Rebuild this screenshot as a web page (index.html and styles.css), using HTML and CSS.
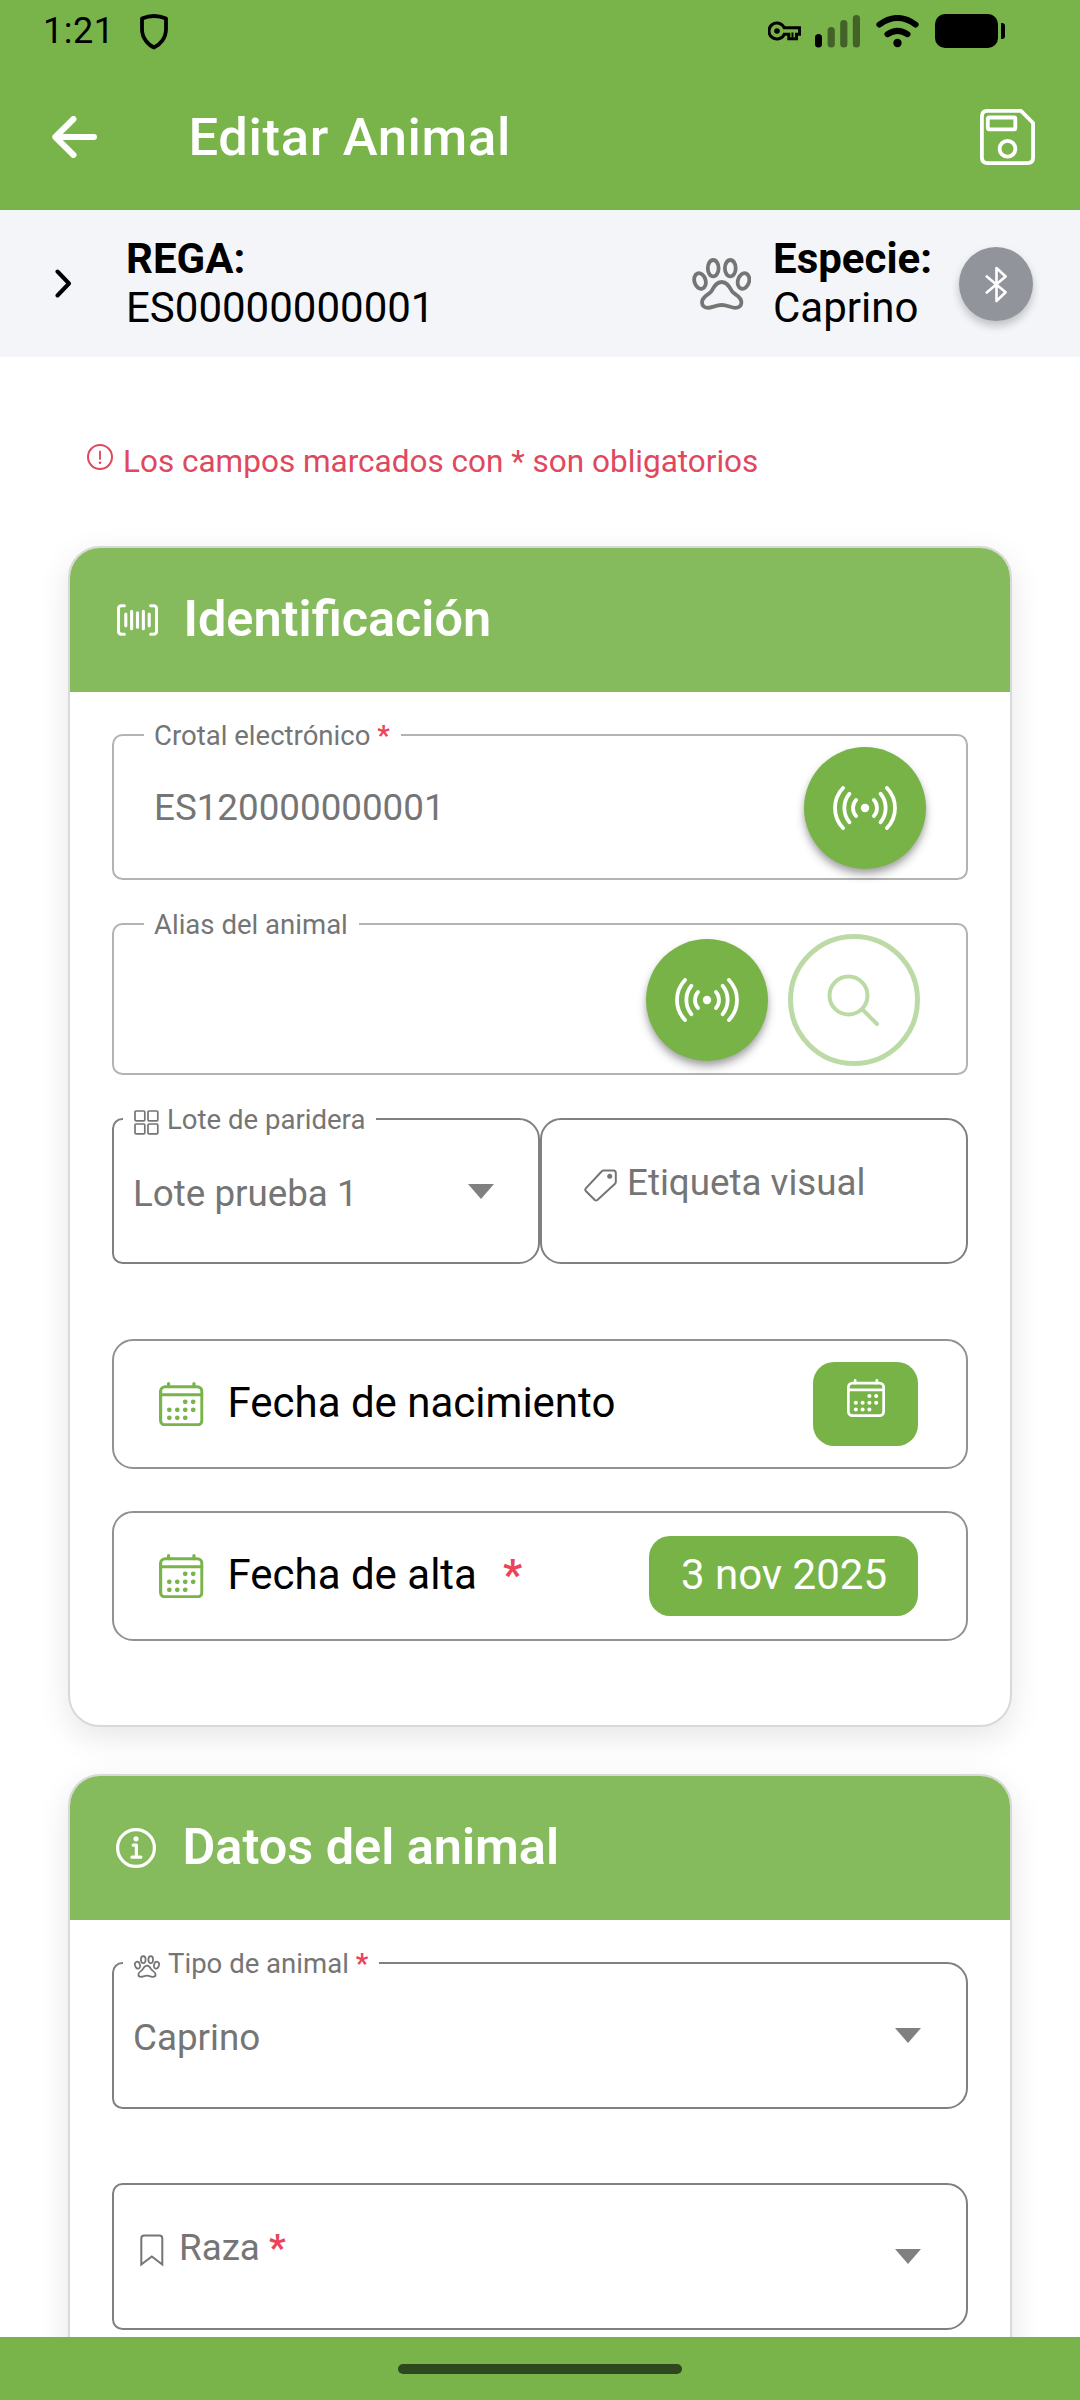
FILE: index.html
```html
<!DOCTYPE html>
<html lang="es">
<head>
<meta charset="utf-8">
<title>Editar Animal</title>
<link rel="stylesheet" href="styles.css">
</head>
<body>
<svg class="defs" width="0" height="0">
  <symbol id="paw" viewBox="0 0 59.5 52">
    <g fill="none" stroke="currentColor" stroke-linejoin="round">
      <ellipse cx="21.2" cy="10.2" rx="5.4" ry="8.2"/><ellipse cx="38.3" cy="10.2" rx="5.4" ry="8.2"/>
      <ellipse cx="8" cy="23" rx="5.6" ry="8" transform="rotate(-16 8 23)"/><ellipse cx="51.5" cy="23" rx="5.6" ry="8" transform="rotate(16 51.5 23)"/>
      <path d="M29.7 24C24 24 22 29 19.6 33C17 37 10 38 10 44.5C10 48 13 49.8 16 49.8C20 49.8 24 47 29.7 47C35.4 47 39 49.8 43.4 49.8C46.4 49.8 49.4 48 49.4 44.5C49.4 38 42.4 37 39.8 33C37.4 29 35.4 24 29.7 24Z"/>
    </g>
  </symbol>
  <symbol id="calendar" viewBox="32 32 448 448">
    <rect x="48" y="80" width="416" height="384" rx="48" fill="none" stroke="currentColor" stroke-width="32"/>
    <path d="M128 48v32M384 48v32M464 160H48" fill="none" stroke="currentColor" stroke-width="32" stroke-linecap="round"/>
    <g fill="currentColor"><circle cx="296" cy="232" r="24"/><circle cx="376" cy="232" r="24"/><circle cx="296" cy="312" r="24"/><circle cx="376" cy="312" r="24"/><circle cx="136" cy="312" r="24"/><circle cx="216" cy="312" r="24"/><circle cx="136" cy="392" r="24"/><circle cx="216" cy="392" r="24"/><circle cx="296" cy="392" r="24"/></g>
  </symbol>
  <symbol id="radio" viewBox="-32 -22 64 44">
    <circle r="4.2" fill="currentColor"/>
    <path d="M-9 -8A12.2 12.2 0 0 0 -9 8M-15.6 -14.2A22.5 22.5 0 0 0 -15.6 14.2M-22 -20A29 29 0 0 0 -22 20M9 -8A12.2 12.2 0 0 1 9 8M15.6 -14.2A22.5 22.5 0 0 1 15.6 14.2M22 -20A29 29 0 0 1 22 20" fill="none" stroke="currentColor" stroke-width="3.8" stroke-linecap="round"/>
  </symbol>
</svg>

<div class="screen">
  <header class="top">
    <div class="status">
      <div class="status-left">
        <span class="clock">1:21</span>
        <svg width="28" height="36" viewBox="0 0 28 36"><path d="M2 4.6Q14 -.6 26 4.6V15C26 24 20 31 14 33.6C8 31 2 24 2 15Z" fill="none" stroke="#000" stroke-width="3.8" stroke-linejoin="round"/></svg>
      </div>
      <div class="status-right">
        <svg class="key" width="34" height="20" viewBox="0 0 34 20"><path d="M16.2 6.7A8 8 0 1 0 16.2 13.3H20.8V17.8H28.5V13.3H31.5V6.7Z" fill="none" stroke="#000" stroke-width="3"/><circle cx="9" cy="10" r="2.8"/><path d="M24.500 11.500v5" stroke="#000" stroke-width="2"/></svg>
        <svg class="signal" width="46" height="33" viewBox="0 0 46 33"><rect x="0" y="19" width="7" height="13.5" rx="3.5"/><g opacity=".45"><rect x="12.6" y="12" width="7.2" height="20.5" rx="3.5"/><rect x="25.2" y="5" width="7.2" height="27.5" rx="3.5"/><rect x="37.8" y="0" width="7.2" height="32.5" rx="3.5"/></g></svg>
        <svg class="wifi" width="43" height="33" viewBox="0 0 43 33"><path d="M3.4 9.6Q21.5 -3.6 39.6 9.6M11.5 19.2Q21.5 12.6 31.5 19.2" fill="none" stroke="#000" stroke-width="6" stroke-linecap="round"/><circle cx="21.5" cy="28" r="4.2"/></svg>
        <span class="battery"></span><span class="battery-tip"></span>
      </div>
    </div>
    <div class="toolbar">
      <svg width="45" height="42" viewBox="0 0 45 42"><path d="M42 21H4M21.5 3L3.3 21L21.5 39" fill="none" stroke="#fff" stroke-width="6" stroke-linecap="round" stroke-linejoin="round"/></svg>
      <h1 class="title">Editar Animal</h1>
      <svg width="55" height="56" viewBox="0 0 55 56" fill="none" stroke="#fff" stroke-width="3.8" stroke-linejoin="round"><path d="M7 1.9H41L53.1 14V48.5Q53.1 54.1 47.5 54.1H7.5Q1.9 54.1 1.9 48.5V7.5Q1.9 1.9 7 1.9Z"/><rect x="7.800" y="8.500" width="27.500" height="11.800" rx="1"/><circle cx="27.500" cy="39.700" r="7.900"/></svg>
    </div>
  </header>

  <section class="farm">
    <svg width="17" height="29" viewBox="0 0 17 29"><path d="M2.5 2.5L14 14.5L2.5 26.5" fill="none" stroke="#000" stroke-width="4" stroke-linecap="round" stroke-linejoin="round"/></svg>
    <p class="rega"><b>REGA:</b><br>ES00000000001</p>
    <svg class="farm-paw" width="59.5" height="52"><use href="#paw"/></svg>
    <p class="species"><b>Especie:</b><br>Caprino</p>
    <span class="bt"><svg width="23" height="37" viewBox="0 0 23 37"><path d="M1.8 10.5L20.6 26.2L11.5 35V2L20.6 10.5L1.8 26.5" fill="none" stroke="#fff" stroke-width="2.6" stroke-linejoin="round" stroke-linecap="round"/></svg></span>
  </section>

  <main class="content">
    <p class="notice">
      <svg width="26" height="26" viewBox="48 48 416 416"><circle cx="256" cy="256" r="192" fill="none" stroke="currentColor" stroke-width="32"/><path d="M256 166V286" stroke="currentColor" stroke-width="30" stroke-linecap="round"/><circle cx="256" cy="348" r="21" fill="currentColor"/></svg>
      <span>Los campos marcados con * son obligatorios</span>
    </p>

    <article class="card">
      <h2 class="card-head">
        <svg width="41" height="32" viewBox="32 81 448 350" fill="none" stroke="#fff" stroke-width="34" stroke-linecap="round" stroke-linejoin="round"><path d="M400 412h32a32 32 0 0 0 32-32v-248a32 32 0 0 0-32-32h-32M112 100H80a32 32 0 0 0-32 32v248a32 32 0 0 0 32 32h32M384 192v128M320 160v192M256 176v160M192 160v192M128 192v128"/></svg>
        <span>Identificación</span>
      </h2>
      <div class="card-body">
        <div class="field light padded">
          <label class="float">Crotal electrónico <b class="req">*</b></label>
          <span class="value">ES120000000001</span>
          <span class="round scan"><svg width="64" height="44"><use href="#radio"/></svg></span>
        </div>
        <div class="field light padded tall">
          <label class="float">Alias del animal</label>
          <span class="round scan second"><svg width="64" height="44"><use href="#radio"/></svg></span>
          <span class="round search"><svg width="56" height="56" viewBox="0 0 56 56"><circle cx="23.500" cy="23.500" r="19" fill="none" stroke="currentColor" stroke-width="4"/><path d="M37.500 37.500L52 52" stroke="currentColor" stroke-width="4" stroke-linecap="round"/></svg></span>
        </div>
        <div class="pair">
          <div class="field select">
            <label class="float"><svg width="25" height="25" viewBox="0 0 25 25" fill="none" stroke="currentColor" stroke-width="1.700"><rect x="1" y="1" width="9.800" height="9.800" rx="1"/><rect x="14" y="1" width="9.800" height="9.800" rx="1"/><rect x="1" y="14" width="9.800" height="9.800" rx="1"/><rect x="14" y="14" width="9.800" height="9.800" rx="1"/></svg><span>Lote de paridera</span></label>
            <span class="value">Lote prueba 1</span>
            <i class="caret"></i>
          </div>
          <div class="field tag">
            <svg width="34" height="33" viewBox="0 0 34 33"><path d="M19.5 1.5H29.5Q31.8 1.5 31.8 4V12.8Q31.8 14 31 14.8L13.4 31Q12 32 10.8 31L1.8 22Q.8 20.6 1.8 19.4L17.8 2.3Q18.5 1.5 19.5 1.5Z" fill="none" stroke="currentColor" stroke-width="2"/><circle cx="25.700" cy="7.300" r="2.500" fill="currentColor"/></svg>
            <span class="placeholder">Etiqueta visual</span>
          </div>
        </div>
        <div class="date first">
          <svg class="green" width="44.5" height="44.5"><use href="#calendar"/></svg>
          <span class="date-label">Fecha de nacimiento</span>
          <span class="pill icon"><svg width="38" height="38"><use href="#calendar"/></svg></span>
        </div>
        <div class="date">
          <svg class="green" width="44.5" height="44.5"><use href="#calendar"/></svg>
          <span class="date-label">Fecha de alta</span><b class="req">*</b>
          <span class="pill"><span>3 nov 2025</span></span>
        </div>
      </div>
    </article>

    <article class="card">
      <h2 class="card-head info">
        <svg width="40" height="40" viewBox="48 48 400 400" fill="none" stroke="#fff" stroke-width="32" stroke-linecap="round" stroke-linejoin="round"><circle cx="248" cy="248" r="184"/><path d="M220 220h32v116M208 340h88"/><circle cx="248" cy="156" r="26" fill="#fff" stroke="none"/></svg>
        <span>Datos del animal</span>
      </h2>
      <div class="card-body">
        <div class="field select">
          <label class="float"><svg class="thin" width="26" height="23"><use href="#paw"/></svg><span>Tipo de animal <b class="req">*</b></span></label>
          <span class="value">Caprino</span>
          <i class="caret"></i>
        </div>
        <div class="field select breed">
          <svg width="24" height="33" viewBox="0 0 24 33"><path d="M1.3 30.5V4.5Q1.3 1.5 4.3 1.5H19.3Q22.3 1.5 22.3 4.5V30.5L11.8 22.5Z" fill="none" stroke="currentColor" stroke-width="2"/></svg>
          <span class="placeholder">Raza <b class="req">*</b></span>
          <i class="caret"></i>
        </div>
      </div>
    </article>
  </main>

  <footer class="nav"><span class="handle"></span></footer>
</div>
</body>
</html>
```
FILE: styles.css
```css
* { box-sizing: border-box; }
body { margin: 0; background: #fff; font-family: Roboto, "Liberation Sans", sans-serif; color: #000; }
h1, h2, p { margin: 0; }
svg { display: block; flex: none; }
.defs { position: absolute; }
.screen { width: 1080px; height: 2400px; display: flex; flex-direction: column; overflow: hidden; }

/* top bars */
.top { height: 210px; flex: none; background: #79b44a; display: flex; flex-direction: column; }
.status { height: 64px; display: flex; justify-content: space-between; padding: 14px 75px 0 43px; }
.status-left, .status-right { display: flex; align-items: flex-start; }
.clock { font-size: 36px; line-height: 36px; margin: -1px 26px 0 0; letter-spacing: .5px; }
.key { margin: 7px 13px 0 0; }
.signal { margin: 1px 15px 0 0; }
.wifi { margin: 1px 16px 0 0; }
.battery { width: 63px; height: 34px; border-radius: 10px; background: #000; }
.battery-tip { width: 4px; height: 16px; margin: 9px 0 0 3px; border-radius: 0 3px 3px 0; background: #000; }
.toolbar { display: flex; align-items: center; height: 146px; padding: 0 45px 0 52px; }
.title { flex: 1; margin-left: 91.5px; font-size: 52.5px; font-weight: 500; line-height: 60px; letter-spacing: .66px; color: #fff; }

.farm { height: 147px; flex: none; background: #f4f5f9; display: flex; align-items: center; padding: 0 47px 0 55px; font-size: 42px; line-height: 49px; }
.rega { margin: -2px 0 0 54px; }
.farm-paw { margin-left: auto; color: #757575; stroke-width: 3.8; }
.species { width: 186px; margin: -2px 0 0 22px; white-space: nowrap; }
.bt { width: 74px; height: 74px; margin-top: 1px; border-radius: 50%; background: #92949c; display: grid; place-items: center; box-shadow: 0 5px 8px rgba(0,0,0,.22); }

/* content */
.content { flex: 1; min-height: 0; overflow: hidden; padding: 0 68px; }
.notice { height: 189px; display: flex; align-items: flex-start; padding: 87px 0 0 19px; gap: 10px; color: #e0485e; font-size: 31.5px; line-height: 36px; }
.notice span { white-space: nowrap; }

.card { border: 2px solid #d8d8d8; border-radius: 32px; overflow: hidden; background: #fff; box-shadow: 0 10px 32px rgba(0,0,0,.1); height: 1181px; margin-bottom: 47px; }
.card-head { height: 144px; display: flex; align-items: center; padding-left: 47px; background: #85bb5d; color: #fff; font-size: 50.4px; font-weight: 600; line-height: 60px; }
.card-head svg { width: 41px; margin-top: -1px; }
.card-head.info svg { width: 40px; margin: -1px 1px 0 -1px; }
.card-head span { margin: -2px 0 0 25.5px; }
.card-body { padding: 42px; }

.field { position: relative; height: 146px; display: flex; align-items: flex-start; border: 2px solid #808080; border-radius: 10.5px 21px 21px 10.5px; color: #757575; font-size: 36.75px; line-height: 43px; white-space: nowrap; }
.field.light { border-color: #b3b3b3; border-radius: 10.5px; margin-bottom: 43px; }
.field.tall { height: 152px; }
.value { padding-top: 50px; }
.padded .value { padding-left: 40px; }
.float { position: absolute; top: -16px; left: 9px; display: flex; align-items: center; gap: 8px; padding: 0 11px; background: #fff; font-size: 27.5625px; line-height: 32px; white-space: pre; }
.padded .float { left: 30px; padding: 0 11px 0 10px; gap: 0; }
.float svg { margin-top: 4px; }
.float .thin { stroke-width: 4; }
.req { color: #eb445a; }

.round { flex: none; width: 122px; height: 122px; border-radius: 50%; display: grid; place-items: center; }
.scan { margin: 11px 40px 0 auto; background: #78b347; color: #fff; box-shadow: 0 6px 10px rgba(0,0,0,.28), 0 3px 5px rgba(0,0,0,.12); }
.scan.second { margin: 14px 20px 0 auto; }
.search { width: 132px; height: 132px; margin: 9px 46px 0 0; border: 5px solid #bcdaa5; color: #bcdaa5; }
.search svg { margin: 0 2px 0 0; }

.pair { display: grid; grid-template-columns: 1fr 1fr; margin-bottom: 75px; }
.select { padding-left: 19px; }
.select .value { padding-top: 52px; }
.caret { width: 0; height: 0; margin: 64px 44px 0 auto; border: 13px solid transparent; border-top: 15px solid #808080; border-bottom: 0; }
.tag { border-radius: 21px; padding: 0 0 0 42px; }
.tag svg { margin: 49px 9px 0 0; }
.placeholder { padding-top: 41px; }

.date { height: 130px; display: flex; align-items: center; padding: 0 48px 0 45px; border: 2px solid #929294; border-radius: 21px; font-size: 42px; line-height: 50px; }
.date.first { margin-bottom: 42px; }
.green { color: #79b44a; }
.date-label { margin: -2px 0 0 24px; }
.date .req { margin: -2px 0 0 26px; }
.pill { margin-left: auto; height: 80px; display: flex; align-items: center; padding: 0 31px 2px 32px; border-radius: 21px; background: #78b347; color: #fff; }
.pill.icon { width: 105px; height: 84px; padding: 0 0 12px; justify-content: center; }

.card + .card .field { height: 147px; }
.card + .card .caret { margin-right: 45px; }
.breed { margin-top: 74px; padding-left: 26px; }
.breed svg { margin: 49px 15px 0 0; }

.nav { height: 63px; flex: none; background: #79b44a; padding-top: 27px; }
.handle { display: block; width: 284px; height: 10px; margin: 0 auto; border-radius: 5px; background: #2f471e; }
```
